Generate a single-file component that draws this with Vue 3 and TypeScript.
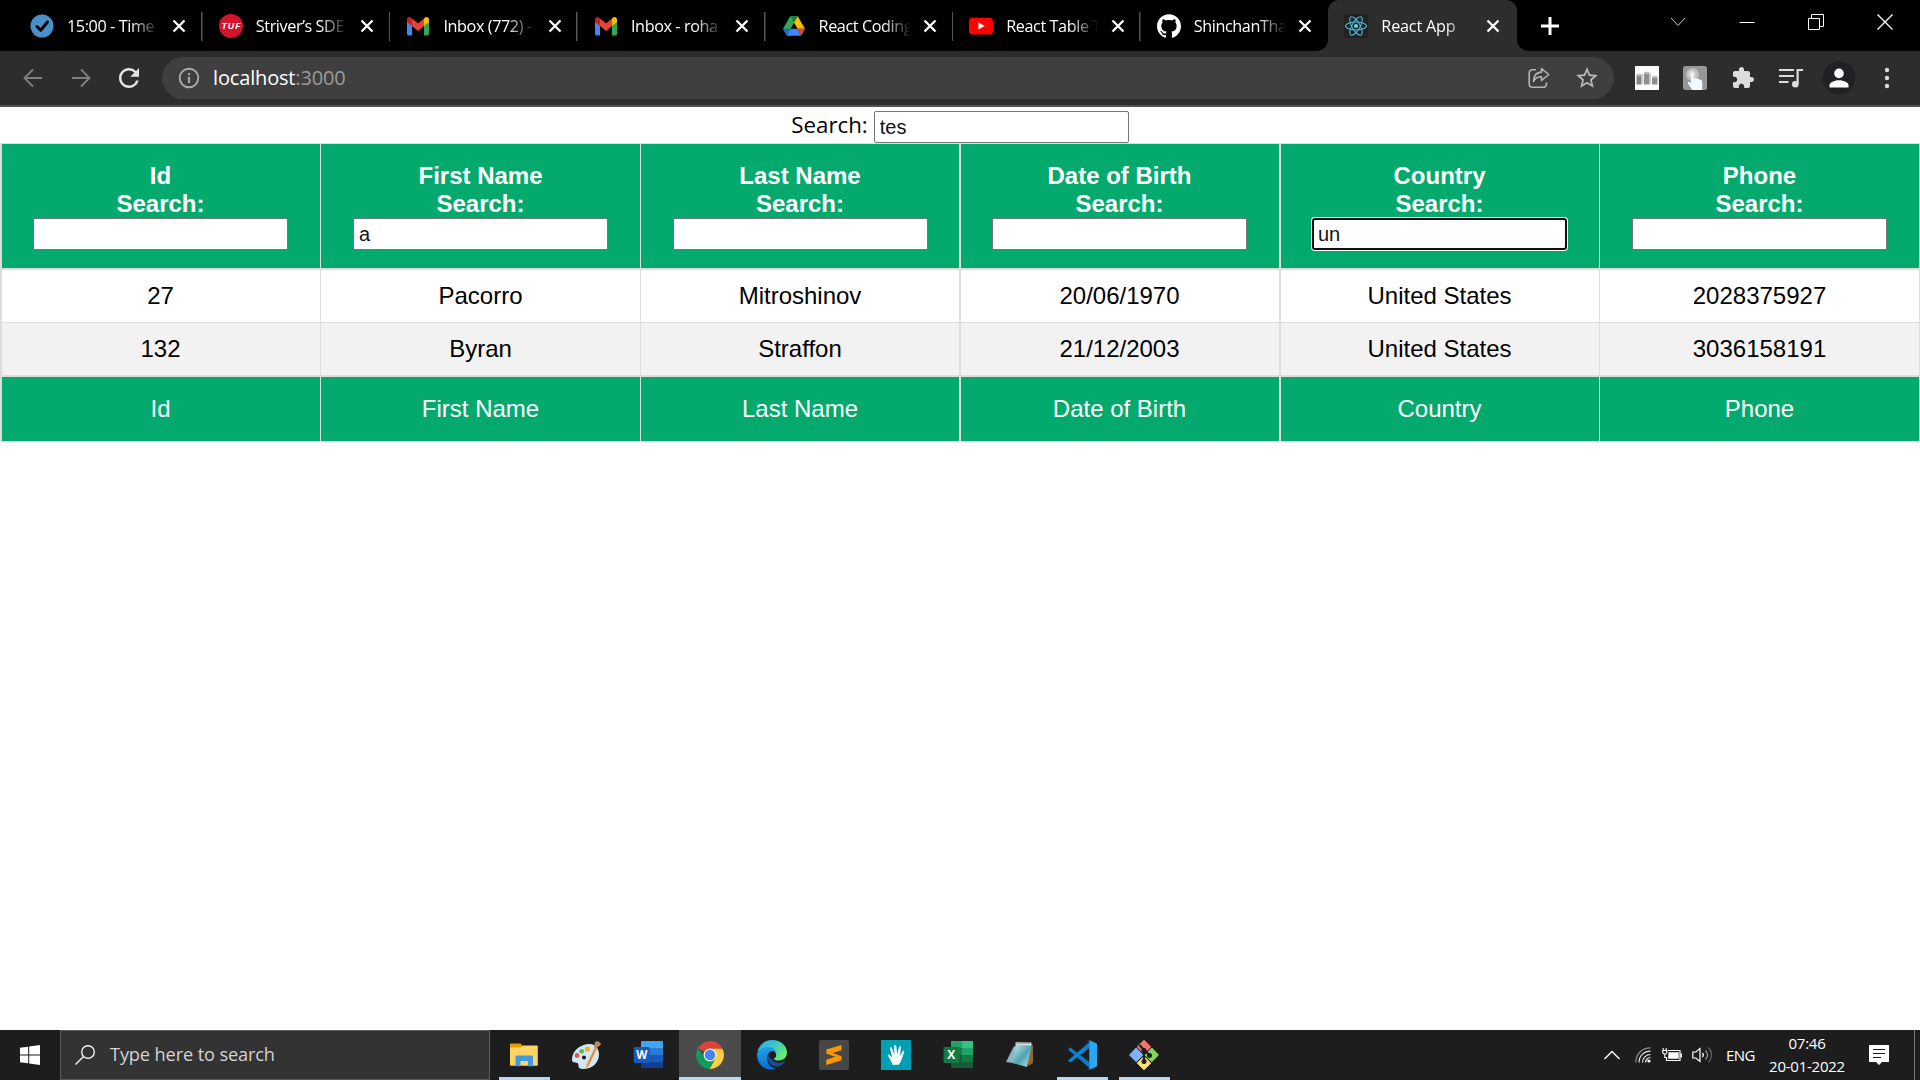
<script setup lang="ts">
import { ref } from 'vue'

interface Tab {
  title: string
  icon: string
  active?: boolean
}

interface Column {
  key: string
  label: string
  filter: string
  focused?: boolean
}

interface App {
  icon: string
  state?: 'running' | 'active'
}

const gmail =
  '<path d="M1 5.5V20a1.5 1.5 0 0 0 1.5 1.5H6V11z" fill="#4285f4"/><path d="M18 11v10.500h3.500A1.500 1.500 0 0 0 23 20V5.500z" fill="#34a853"/><path d="M6 4.500v7.500l6 5 6-5V4.500L12 9.500z" fill="#ea4335"/><path d="M1 5.500V8l5 4V4.500L5 3.600C3.300 2.200 1 3.400 1 5.500z" fill="#c5221f"/><path d="M23 5.500V8l-5 4V4.500l1-.9C20.700 2.200 23 3.400 23 5.500z" fill="#fbbc04"/>'

const favicons: Record<string, string> = {
  check:
    '<circle cx="12" cy="12" r="11.500" fill="#4a90c8"/><path d="M7 12.500l3.700 3.700 6.800-8.200" fill="none" stroke="#000" stroke-width="3" stroke-linecap="round" stroke-linejoin="round"/>',
  tuf:
    '<circle cx="12" cy="12" r="12" fill="#d4142c"/><text x="12" y="15.200" text-anchor="middle" font-family="Liberation Sans, sans-serif" font-size="8.800" font-weight="bold" font-style="italic" fill="#fff" textLength="19">TUF</text>',
  gmail,
  drive:
    '<path d="M8.300 2.200h7.400L12 8.700 4.800 21.200 1 14.800z" fill="#34a853"/><path d="M8.300 2.200h7.400L12 8.700z" fill="#188038"/><path d="M15.700 2.200L23 14.800h-7.400L12 8.700z" fill="#fbbc04"/><path d="M8.400 14.800h7.200l3.700 6.900H4.700z" fill="#4285f4"/><path d="M1 14.800h7.400l-3.700 6.900z" fill="#1967d2"/><path d="M15.600 14.800H23l-3.700 6.900z" fill="#ea4335"/>',
  youtube:
    '<rect x="0" y="3.700" width="24" height="16.800" rx="3.500" fill="#f00"/><path d="M9.500 8.600v7l6.200-3.500z" fill="#fff"/>',
  github:
    '<path fill="#fff" d="M12 .297c-6.630 0-12 5.373-12 12 0 5.303 3.438 9.800 8.205 11.385.6.113.82-.258.82-.577 0-.285-.01-1.040-.015-2.040-3.338.724-4.042-1.610-4.042-1.610C4.422 18.070 3.633 17.700 3.633 17.700c-1.087-.744.084-.729.084-.729 1.205.084 1.838 1.236 1.838 1.236 1.070 1.835 2.809 1.305 3.495.998.108-.776.417-1.305.76-1.605-2.665-.3-5.466-1.332-5.466-5.930 0-1.310.465-2.380 1.235-3.220-.135-.303-.54-1.523.105-3.176 0 0 1.005-.322 3.300 1.230.96-.267 1.980-.399 3-.405 1.020.006 2.040.138 3 .405 2.280-1.552 3.285-1.230 3.285-1.230.645 1.653.24 2.873.12 3.176.765.840 1.230 1.910 1.230 3.220 0 4.610-2.805 5.625-5.475 5.920.42.360.81 1.096.81 2.220 0 1.606-.015 2.896-.015 3.286 0 .315.21.690.825.570C20.565 22.092 24 17.592 24 12.297c0-6.627-5.373-12-12-12"/>',
  react:
    '<rect width="24" height="24" rx="1.500" fill="#222"/><g fill="none" stroke="#4fb6d2" stroke-width="1.100"><ellipse cx="12" cy="12" rx="10.400" ry="4"/><ellipse cx="12" cy="12" rx="10.400" ry="4" transform="rotate(60 12 12)"/><ellipse cx="12" cy="12" rx="10.400" ry="4" transform="rotate(120 12 12)"/></g><circle cx="12" cy="12" r="2" fill="#61dafb"/>',
}

const tabs: Tab[] = [
  { title: '15:00 - Time', icon: 'check' },
  { title: 'Striver’s SDE', icon: 'tuf' },
  { title: 'Inbox (772) -', icon: 'gmail' },
  { title: 'Inbox - roha', icon: 'gmail' },
  { title: 'React Coding', icon: 'drive' },
  { title: 'React Table T', icon: 'youtube' },
  { title: 'ShinchanTha', icon: 'github' },
  { title: 'React App', icon: 'react', active: true },
]

const globalSearch = ref('tes')

const columns = ref<Column[]>([
  { key: 'id', label: 'Id', filter: '' },
  { key: 'firstName', label: 'First Name', filter: 'a' },
  { key: 'lastName', label: 'Last Name', filter: '' },
  { key: 'birth', label: 'Date of Birth', filter: '' },
  { key: 'country', label: 'Country', filter: 'un', focused: true },
  { key: 'phone', label: 'Phone', filter: '' },
])

const rows: string[][] = [
  ['27', 'Pacorro', 'Mitroshinov', '20/06/1970', 'United States', '2028375927'],
  ['132', 'Byran', 'Straffon', '21/12/2003', 'United States', '3036158191'],
]

const appIcons: Record<string, string> = {
  folder:
    '<path d="M1 4.500A1 1 0 0 1 2 3.500h9.500l2.500 2.800V10H1z" fill="#e0a000"/><path d="M1 7.500h11l2-2h14a.8.8 0 0 1 .8.800V25a.8.8 0 0 1-.8.800H2a1 1 0 0 1-1-1z" fill="#ffd466"/><path d="M6.500 26V17a1.500 1.500 0 0 1 1.500-1.500h14.500A1.500 1.500 0 0 1 24 17v9.300h-5V21h-7.500v5.300h-5z" fill="#3f9bdc"/>',
  paint:
    '<path d="M19 4C11 3.500 1 10 1 19.500c0 4.500 4.500 2 6 4 1.500 2-1.500 5 5 5.500C21 29 28 23 28 14.500 28 8 24 4.300 19 4z" fill="#d3e7f3"/><circle cx="13" cy="17.500" r="2" fill="#1d1d1d"/><circle cx="6" cy="15.500" r="2.400" fill="#df5550"/><circle cx="10.700" cy="11.300" r="2.400" fill="#56bb4d"/><circle cx="16.500" cy="9" r="2.600" fill="#f7ac22"/><path d="M15 29l1-5 8-17 2 1-8 17z" fill="#e98a31"/><path d="M23 7.500L24 2c2-2 5.500 0 6 2.500L25.500 8z" fill="#b98b64"/>',
  word:
    '<path d="M8 2a1 1 0 0 1 1-1h20a1 1 0 0 1 1 1v6H8z" fill="#41a5ee"/><path d="M8 8h22v7H8z" fill="#2b7cd3"/><path d="M8 15h22v7H8z" fill="#185abd"/><path d="M8 22h22v5a1 1 0 0 1-1 1H9a1 1 0 0 1-1-1z" fill="#103f91"/><rect x="0.800" y="7" width="16" height="16" rx="1.300" fill="#185abd"/><text x="8.700" y="19" text-anchor="middle" font-family="Open Sans, sans-serif" font-weight="bold" font-size="11.500" fill="#fff">W</text>',
  chrome:
    '<path d="M15 15L3 8.100A13.900 13.900 0 0 1 27 8.100z" fill="#db4437"/><path d="M15 15V1.100A13.900 13.900 0 0 1 27 8.100H15z" fill="#db4437"/><path d="M15 8.700H27.400A13.900 13.900 0 0 1 14.500 28.900L20.500 18z" fill="#ffcd40"/><path d="M3 8.100L9.500 18.200 15 21.400h3.600L14.500 28.900A13.900 13.900 0 0 1 3 8.100z" fill="#0f9d58"/><circle cx="15" cy="15" r="6.500" fill="#f1f1f1"/><circle cx="15" cy="15" r="5.200" fill="#4285f4"/>',
  edge:
    '<defs><linearGradient id="ea" x1="0" x2="1" y1="0" y2="0.500"><stop offset="0" stop-color="#2bb3e8"/><stop offset="0.500" stop-color="#35c1d0"/><stop offset="1" stop-color="#66eb6e"/></linearGradient><linearGradient id="eb" x1="0" x2="0" y1="0" y2="1"><stop offset="0" stop-color="#1da4e6"/><stop offset="1" stop-color="#0a6cd0"/></linearGradient></defs><path d="M.3 13C1.500 5 7.500 0 15 0c9 0 15 6 15 12.500 0 5-4 8-8.500 8-3.500 0-5-1.500-4.500-2.500 1.500-2 1.500-4.500 0-6.500C13 7 4 7 .3 13z" fill="url(#ea)"/><path d="M.2 13.500C2 9 7 7 11 7c5 0 8 2.500 8 6-3-3-9-1-9 5 0 6.500 4.500 10 9 10.500C11 32-1 26 .2 13.500z" fill="url(#eb)"/><path d="M13.500 11.700C9 13.500 9.500 21 14 24.500c4 3 10 2.500 13.700-2 .5-.6 0-1.200-.7-.8C20.500 25 12 21 13.500 11.700z" fill="#114f96"/><circle cx="15.300" cy="15" r="3.800" fill="#1d1d1d"/>',
  sublime:
    '<rect width="30" height="30" rx="2" fill="#474747"/><path d="M22.500 5v5.200l-9 2.900 9 3.200v4L7.300 25v-5.200l9-3-9-3.200V9.500z" fill="#ff9800"/>',
  hand:
    '<rect width="30" height="30" fill="#009fb2"/><path d="M11.500 24.800l-1-2.800L7 15.800c-.5-1 .8-1.800 1.600-.9l2.700 2.600L9 8.300c-.2-1.200 1.400-1.600 1.900-.4l2.500 7L13.200 6c0-1.400 1.900-1.400 2 0l1 8.600 1.800-7.700c.3-1.200 2-.9 1.900.4l-.9 8.700 2.600-4.800c.6-1 1.900-.4 1.600.7L20 21l-2.300 3.800z" fill="#fff"/>',
  excel:
    '<path d="M8 2a1 1 0 0 1 1-1h10v7H8z" fill="#21a366"/><path d="M19 1h10a1 1 0 0 1 1 1v6H19z" fill="#33c481"/><path d="M8 8h11v7H8z" fill="#107c41"/><path d="M19 8h11v7H19z" fill="#21a366"/><path d="M8 15h11v7H8z" fill="#185c37"/><path d="M19 15h11v7H19z" fill="#107c41"/><path d="M8 22h22v5a1 1 0 0 1-1 1H9a1 1 0 0 1-1-1z" fill="#185c37"/><rect x="0.500" y="7" width="16" height="16" rx="1.300" fill="#107c41"/><text x="8.300" y="19.200" text-anchor="middle" font-family="Open Sans, sans-serif" font-weight="bold" font-size="12" fill="#fff">X</text>',
  notepad:
    '<defs><linearGradient id="np" x1="0" x2="1" y1="0" y2="1"><stop offset="0" stop-color="#d8eef2"/><stop offset="0.550" stop-color="#4fa3b3"/><stop offset="1" stop-color="#c8e6ec"/></linearGradient></defs><path d="M23 3l5 2v18l-5 3z" fill="#8c6a35"/><path d="M9 6L1 22l7 1 6-14z" fill="#8ab8c2"/><path d="M11 3l16 1-5 23-15-4z" fill="url(#np)"/><path d="M11 2l15.500.5-.6 3-15.700-1z" fill="#e2e2e2"/><path d="M12 2v2m2-2v2m2-2v2m2-2v2m2-2v2m2-2v2m2-2v2" stroke="#555" stroke-width="0.700"/>',
  vscode:
    '<path d="M1 9.500l2.500-2 19 14.500V28z" fill="#0a7bc8"/><path d="M1 20.500l2.500 2L22.500 8V2z" fill="#1184d0"/><path d="M21.500 0L28.800 3a1.500 1.500 0 0 1 1.200 1.500v21a1.500 1.500 0 0 1-1.200 1.500l-7.300 3c-.6.200-1 .1-1.500-.4 1 .6 2.500.2 2.500-1.200V1.600C22.500.2 21 0 20 .4c.4-.4.9-.6 1.500-.4z" fill="#2aa7f2"/><path d="M22.500 1v28L29 26.500V3.500z" fill="#2aa7f2"/>',
  git:
    '<path d="M15 .2l6.700 6.700L15 13.600 8.300 6.900z" fill="#f77474" stroke="#f77474" stroke-linejoin="round"/><path d="M7.200 8l6.700 7-6.700 6.700L.5 15z" fill="#80b3ff" stroke="#80b3ff" stroke-linejoin="round"/><path d="M22.800 8l6.700 7-6.700 6.700-6.700-6.700z" fill="#87d55f" stroke="#87d55f" stroke-linejoin="round"/><path d="M15 16.400l6.700 6.700-6.700 6.700-6.700-6.700z" fill="#ffe173" stroke="#ffe173" stroke-linejoin="round"/><path d="M10.500 5l4.500 5v12M15 10l6 5.500" fill="none" stroke="#1d1d1d" stroke-width="2.200"/><circle cx="15" cy="10.500" r="2.500" fill="#1d1d1d"/><circle cx="20.500" cy="15.500" r="2.500" fill="#1d1d1d"/><circle cx="15" cy="21.500" r="2.500" fill="#1d1d1d"/>',
}

const apps: App[] = [
  { icon: 'folder', state: 'running' },
  { icon: 'paint' },
  { icon: 'word' },
  { icon: 'chrome', state: 'active' },
  { icon: 'edge' },
  { icon: 'sublime' },
  { icon: 'hand' },
  { icon: 'excel' },
  { icon: 'notepad' },
  { icon: 'vscode', state: 'running' },
  { icon: 'git', state: 'running' },
]
</script>

<template>
  <div class="screen">
    <header class="tabstrip">
      <div class="tabs">
        <div v-for="(tab, i) in tabs" :key="i" class="tab" :class="{ active: tab.active, last: i === tabs.length - 2 }">
          <svg class="favicon" viewBox="0 0 24 24" v-html="favicons[tab.icon]"></svg>
          <span class="tab-title">{{ tab.title }}</span>
          <svg class="close" viewBox="0 0 14 14"><path d="M1.500 1.500l11 11M12.500 1.500l-11 11" /></svg>
        </div>
      </div>
      <svg class="new-tab" viewBox="0 0 18 18"><path d="M9 0v18M0 9h18" stroke="#fff" stroke-width="3" /></svg>
      <div class="window-buttons">
        <svg viewBox="0 0 16 16"><path d="M1 4l7 7.500L15 4" stroke="#d0d0d0" /></svg>
        <svg viewBox="0 0 16 16"><path d="M.5 8.500h15" /></svg>
        <svg viewBox="0 0 16 16"><path d="M.5 4.500h11v11H.500zM3.500 4V.500h12v12h-3.500" /></svg>
        <svg viewBox="0 0 16 16"><path d="M.5.500l15 15M15.500.500l-15 15" stroke-width="1.300" /></svg>
      </div>
    </header>

    <nav class="toolbar">
      <div class="nav-buttons">
        <svg viewBox="0 0 24 24" fill="none" stroke="#7f7f7f" stroke-width="1.900"><path d="M21 12H4M12 3.500L3.500 12l8.500 8.500" /></svg>
        <svg viewBox="0 0 24 24" fill="none" stroke="#7f7f7f" stroke-width="1.900"><path d="M3 12h17M12 3.500l8.500 8.500-8.500 8.500" /></svg>
        <svg class="reload" viewBox="0 0 24 24" fill="#e4e4e4"><path d="M17.650 6.350A7.958 7.958 0 0 0 12 4c-4.420 0-7.990 3.580-7.990 8s3.570 8 7.990 8c3.730 0 6.840-2.550 7.730-6h-2.080A5.990 5.990 0 0 1 12 18c-3.310 0-6-2.690-6-6s2.690-6 6-6c1.660 0 3.140.690 4.220 1.780L13 11h7V4l-2.350 2.350z" /></svg>
      </div>
      <div class="omnibox">
        <svg class="info" viewBox="0 0 22 22"><circle cx="11" cy="11" r="9.300" fill="none" stroke="#a8abaf" stroke-width="1.900" /><path d="M11 9.700v6.300M11 6v2.100" stroke="#a8abaf" stroke-width="2.100" /></svg>
        <span class="url"><b>localhost</b>:3000</span>
        <svg class="share" viewBox="0 0 22 22" fill="none" stroke="#b4b4b4" stroke-width="1.600" stroke-linejoin="round"><path d="M8 2.700H4.500A3.300 3.300 0 0 0 1.200 6v11a3.300 3.300 0 0 0 3.300 3.300h10.700a3.300 3.300 0 0 0 3.300-3.300v-1.500" /><path d="M13.500 1.500l7.300 6-7.300 6v-3.700c-3.800-.1-6.300 1.400-8 4.700.2-5.400 3-9.100 8-9.400z" /></svg>
        <svg class="star" viewBox="0 0 24 24" fill="#b9b9b9"><path d="M22 9.240l-7.190-.62L12 2 9.190 8.630 2 9.240l5.460 4.730L5.820 21 12 17.270 18.180 21l-1.630-7.030L22 9.240zM12 15.400l-3.760 2.270 1-4.280-3.320-2.880 4.380-.38L12 6.100l1.710 4.040 4.380.38-3.320 2.880 1 4.280L12 15.400z" /></svg>
      </div>
      <div class="extensions">
        <svg viewBox="0 0 24 24"><rect width="24" height="24" fill="#fcfcfc" /><path d="M1.500 9h5v9.500h-5z" fill="#858585" /><path d="M9 7h5.500v11.500H9z" fill="#8d8d8d" /><path d="M17 11h5.500v7.500H17z" fill="#8d8d8d" /><ellipse cx="4" cy="9" rx="2.500" ry="1.200" fill="#bbb" /><ellipse cx="11.800" cy="7" rx="2.700" ry="1.300" fill="#bbb" /><ellipse cx="19.800" cy="11" rx="2.700" ry="1.300" fill="#bbb" /><path d="M7 8h1.300v10H7zM14.500 8h1.500v10h-1.500z" fill="#c9c9c9" /></svg>
        <svg viewBox="0 0 24 24"><rect width="24" height="24" rx="2.500" fill="#979797" /><circle cx="9.500" cy="8.500" r="6.500" fill="#bfbfbf" /><circle cx="9" cy="8" r="3.800" fill="#d6d6d6" /><path d="M8 7.500c0-1.800 2.500-1.800 2.600 0V13l1.500-1c1 0 1.600.3 1.900 1 1-.7 2-.3 2.300.6 1.300-.4 2.700.3 2.900 1.900V24H9.200L5 17.500c-.7-1.400.9-2.300 2-1.200l1 1z" fill="#f2f9ff" /></svg>
        <svg viewBox="0 0 24 24" fill="#dcdcdc"><path d="M20.500 11H19V7c0-1.100-.9-2-2-2h-4V3.500C13 2.120 11.880 1 10.500 1S8 2.120 8 3.500V5H4c-1.100 0-1.990.9-1.990 2v3.800H3.500c1.490 0 2.700 1.210 2.700 2.700s-1.210 2.700-2.700 2.700H2V20c0 1.100.9 2 2 2h3.800v-1.500c0-1.490 1.210-2.700 2.700-2.700 1.490 0 2.700 1.210 2.700 2.700V22H17c1.100 0 2-.9 2-2v-4h1.500c1.380 0 2.500-1.120 2.500-2.500S21.880 11 20.500 11z" /></svg>
        <svg viewBox="0 0 24 24" fill="none" stroke="#dcdcdc" stroke-width="2"><path d="M0 4h15M0 10h15M0 16h9.500" /><path d="M18.600 18V4H24" stroke-width="2.200" /><circle cx="16.300" cy="18.300" r="3.300" fill="#dcdcdc" stroke="none" /></svg>
        <svg class="avatar" viewBox="0 0 34 34"><circle cx="17" cy="17" r="16.500" fill="#202124" /><circle cx="17" cy="12.400" r="4.800" fill="#fff" /><path d="M7.500 26.500v-2.200c0-3.300 6.300-5 9.500-5s9.500 1.700 9.500 5v2.200z" fill="#fff" /></svg>
        <svg viewBox="0 0 24 24" fill="#dcdcdc"><circle cx="12" cy="4" r="2.200" /><circle cx="12" cy="12" r="2.200" /><circle cx="12" cy="20" r="2.200" /></svg>
      </div>
    </nav>

    <main class="page">
      <label class="global-search">
        <span>Search:</span>
        <input v-model="globalSearch" type="text" />
      </label>
      <div class="table">
        <div class="row head">
          <div v-for="col in columns" :key="col.key" class="cell">
            <div>{{ col.label }}</div>
            <div>Search:</div>
            <input v-model="col.filter" type="text" :class="{ focused: col.focused }" />
          </div>
        </div>
        <div v-for="(row, r) in rows" :key="r" class="row body" :class="{ even: r % 2 === 1 }">
          <div v-for="(value, c) in row" :key="c" class="cell">{{ value }}</div>
        </div>
        <div class="row foot">
          <div v-for="col in columns" :key="col.key" class="cell">{{ col.label }}</div>
        </div>
      </div>
    </main>

    <footer class="taskbar">
      <div class="start">
        <svg viewBox="0 0 20 20" fill="#fff"><path d="M0 2.800L8.200 1.700V9.500H0zM9.200 1.500L20 0v9.500H9.200zM0 10.500h8.200v7.800L0 17.200zM9.200 10.500H20V20L9.200 18.500z" /></svg>
      </div>
      <div class="task-search">
        <svg viewBox="0 0 20 20" fill="none" stroke="#f0f0f0" stroke-width="1.400"><circle cx="13" cy="7" r="6.300" /><path d="M8.500 11.500L.5 19.500" /></svg>
        <span>Type here to search</span>
      </div>
      <div class="apps">
        <div v-for="app in apps" :key="app.icon" class="app" :class="app.state">
          <svg viewBox="0 0 30 30" v-html="appIcons[app.icon]"></svg>
        </div>
      </div>
      <div class="tray">
        <svg class="chevron" viewBox="0 0 16 10" fill="none" stroke="#fff" stroke-width="1.400"><path d="M.5 9L8 1.500 15.500 9" /></svg>
        <svg class="wifi" viewBox="0 0 16 16" fill="none" stroke="#e8e8e8" stroke-width="1.200"><path d="M.8 15.500C.8 7 7 .8 15.500.8" stroke="#8d8d8d" /><path d="M4 15.500C4 9 9 4.200 15.500 4.200M7.500 15.500c0-4.500 3.500-8 8-8M10.500 15.500c0-2.700 2.300-5 5-5" /><circle cx="14" cy="14" r="1.600" fill="#fff" stroke="none" /></svg>
        <svg class="battery" viewBox="0 0 20 14"><path d="M6 2.500h12v10H4.500V9M19.400 5.500v4" fill="none" stroke="#fff" stroke-width="1.200" /><path d="M6.500 4.300h10.200v6.500H6z" fill="#fff" /><path d="M1.200 0v2M4.200 0v2M.6 2.500h4.200v2L3.600 6H2L.6 4.500zM2.800 6v3.500h1.700" fill="none" stroke="#fff" stroke-width="1.100" /></svg>
        <svg class="speaker" viewBox="0 0 22 18" fill="none" stroke="#fff" stroke-width="1.200"><path d="M.8 6h3L8 2.500v13L3.800 12h-3z" /><path d="M10.500 7c1 1.200 1 2.800 0 4" /><path d="M13.500 4.500c2.500 2.700 2.500 6.300 0 9" stroke="#999" /><path d="M16.500 1.500c4 4.300 4 10.700 0 15" stroke="#666" /></svg>
        <span class="lang">ENG</span>
        <div class="clock"><span>07:46</span><span>20-01-2022</span></div>
        <svg class="notice" viewBox="0 0 20 20"><path d="M0 0h20v17h-7l-3 3-3-3H0z" fill="#fff" /><path d="M4 4.500h12M4 8.500h12M4 12.500h8" stroke="#1d1d1d" stroke-width="1.100" /></svg>
        <i class="peek"></i>
      </div>
    </footer>
  </div>
</template>

<style>
body {
  margin: 0;
  overflow: hidden;
}
</style>

<style scoped>
.screen {
  width: 1920px;
  height: 1080px;
  display: flex;
  flex-direction: column;
  background: #fff;
  font-family: 'Open Sans', 'Noto Sans', sans-serif;
  overflow: hidden;
}
svg {
  display: block;
  flex: none;
}
.tabstrip {
  height: 51px;
  background: #000;
  display: flex;
  align-items: center;
}
.tabs {
  display: flex;
  height: 51px;
  padding-left: 14px;
}
.tab {
  width: 187.600px;
  box-sizing: border-box;
  display: flex;
  align-items: center;
  padding: 1px 16px 0;
  color: #fff;
  background: linear-gradient(#555, #555) no-repeat right 0 top 12px / 1.500px 29px;
}
.tab:first-child {
  width: 188.800px;
}
.tab.last {
  background: none;
}
.tab.active {
  position: relative;
  width: 189px;
  background: #2d2d2d;
  border-radius: 11px 11px 0 0;
}
.tab.active::before,
.tab.active::after {
  content: '';
  position: absolute;
  bottom: 0;
  width: 11px;
  height: 11px;
}
.tab.active::before {
  right: 100%;
  background: radial-gradient(circle at 0 0, #000 10.500px, #2d2d2d 11px);
}
.tab.active::after {
  left: 100%;
  background: radial-gradient(circle at 100% 0, #000 10.500px, #2d2d2d 11px);
}
.favicon {
  width: 24px;
  height: 24px;
}
.tab-title {
  width: 94px;
  margin-left: 13px;
  font-size: 16.200px;
  letter-spacing: -0.400px;
  line-height: 24px;
  white-space: nowrap;
  overflow: hidden;
  mask-image: linear-gradient(90deg, #000 68%, transparent 98%);
}
.tab.active .tab-title {
  letter-spacing: -0.200px;
}
.close {
  width: 14px;
  height: 14px;
  margin-left: 10.500px;
  stroke: #fff;
  stroke-width: 2.300;
}
.new-tab {
  width: 18px;
  height: 18px;
  margin-left: 24px;
}
.window-buttons {
  margin-left: auto;
  margin-right: 27px;
  margin-bottom: 8px;
  display: flex;
  gap: 53px;
}
.window-buttons svg {
  width: 16px;
  height: 16px;
  fill: none;
  stroke: #fff;
  stroke-width: 1;
}
.toolbar {
  height: 54px;
  border-bottom: 2px solid #545252;
  background: #2d2d2d;
  display: flex;
  align-items: center;
}
.nav-buttons {
  width: 162px;
  display: flex;
  gap: 24px;
  padding-left: 21px;
  box-sizing: border-box;
}
.nav-buttons svg {
  width: 24px;
  height: 24px;
}
.nav-buttons .reload {
  width: 30px;
  height: 30px;
  margin: -3px -3px -3px -3px;
}
.omnibox {
  width: 1452px;
  height: 42px;
  border-radius: 21px;
  background: #3f3f3f;
  display: flex;
  align-items: center;
  padding: 0 14px 0 16px;
  box-sizing: border-box;
}
.info {
  width: 22px;
  height: 22px;
}
.url {
  margin-left: 13px;
  margin-right: auto;
  font-size: 20px;
  letter-spacing: -0.160px;
  line-height: 28px;
  color: #9b9b9b;
}
.url b {
  font-weight: 400;
  color: #fff;
}
.share {
  width: 22px;
  height: 22px;
  margin-right: 24px;
}
.star {
  width: 26px;
  height: 26px;
}
.extensions {
  display: flex;
  align-items: center;
  gap: 24px;
  padding-left: 21px;
}
.extensions svg {
  width: 24px;
  height: 24px;
}
.extensions .avatar {
  width: 34px;
  height: 34px;
  margin: 0 -5px;
}
.page {
  flex: 1;
}
.global-search {
  display: flex;
  justify-content: center;
  height: 36px;
  padding-top: 4px;
  box-sizing: border-box;
}
.global-search span {
  font-size: 22.300px;
  line-height: 28px;
  margin-right: 6px;
  color: #000;
}
input {
  display: block;
  width: 255px;
  height: 32px;
  box-sizing: border-box;
  margin: 0 auto;
  padding: 1px 5px;
  border: 1px solid #767676;
  border-radius: 0;
  background: #fff;
  color: #111;
  font: 20px 'Liberation Sans', sans-serif;
  outline: none;
}
.global-search input {
  margin: 0;
  border-radius: 2px;
}
input.focused {
  border: 2px solid #101010;
  border-radius: 3px;
  box-shadow: 0 0 0 1px #fff;
  padding: 0 4px;
}
.table {
  border-top: 1px solid #ddd;
  font: 24px/28px 'Liberation Sans', Arial, sans-serif;
  text-align: center;
}
.row {
  display: grid;
  grid-template-columns: 320px 320px 319px 320px 320px 321px;
  border-bottom: 2px solid #ddd;
  color: #000;
}
.row.body:not(.even) {
  border-bottom-width: 1px;
}
.cell {
  border-left: 1px solid #ddd;
  box-sizing: border-box;
}
.cell:nth-child(1),
.cell:nth-child(4),
.cell:nth-child(5) {
  border-left-width: 2px;
  padding-right: 1px;
}
.cell:nth-child(6) {
  border-right: 1px solid #ddd;
}
.head,
.foot {
  background: #04aa6d;
  color: #fff;
}
.head .cell {
  height: 124px;
  padding-top: 18px;
  font-weight: 700;
}
.body .cell {
  height: 52px;
  padding-top: 12px;
}
.even {
  background: #f2f2f2;
}
.foot {
  border-bottom-width: 1px;
}
.foot .cell {
  height: 64px;
  padding-top: 18px;
}
.taskbar {
  height: 50px;
  background: #1d1d1d;
  display: flex;
}
.start {
  width: 60px;
  display: flex;
  align-items: center;
  justify-content: center;
}
.start svg {
  width: 20px;
  height: 20px;
}
.task-search {
  width: 430px;
  box-sizing: border-box;
  border: 1px solid #5c5c5c;
  background: #333;
  display: flex;
  align-items: center;
  padding-left: 14px;
  color: #d2d2d2;
  font-size: 18.200px;
  letter-spacing: -0.130px;
}
.task-search svg {
  width: 20px;
  height: 20px;
  margin-right: 15px;
}
.task-search span {
  padding-bottom: 2px;
}
.apps {
  display: flex;
  margin-left: 3px;
}
.app {
  width: 62px;
  display: flex;
  align-items: center;
  justify-content: center;
}
.app svg {
  width: 30px;
  height: 30px;
}
.app.running {
  background: linear-gradient(#b4d8fb, #b4d8fb) no-repeat center bottom / 51px 3px;
}
.app.active {
  background: linear-gradient(#b4d8fb, #b4d8fb) no-repeat center bottom / 100% 3px #4b4b4b;
}
.tray {
  margin-left: auto;
  display: flex;
  align-items: center;
  color: #fff;
}
.chevron {
  width: 16px;
  height: 10px;
}
.wifi {
  width: 16px;
  height: 16px;
  margin-left: 15px;
}
.battery {
  width: 20px;
  height: 14px;
  margin-left: 11px;
}
.speaker {
  width: 22px;
  height: 18px;
  margin-left: 10px;
}
.lang {
  width: 29px;
  margin-left: 12px;
  font-size: 15px;
  letter-spacing: -0.600px;
}
.clock {
  width: 78px;
  margin-left: 13px;
  display: flex;
  flex-direction: column;
  align-items: center;
  font-size: 15px;
  line-height: 23px;
  letter-spacing: -0.250px;
  white-space: nowrap;
}
.notice {
  width: 20px;
  height: 20px;
  margin-left: 23px;
}
.peek {
  width: 1px;
  height: 50px;
  margin-left: 25px;
  margin-right: 5px;
  background: #777;
}
</style>
